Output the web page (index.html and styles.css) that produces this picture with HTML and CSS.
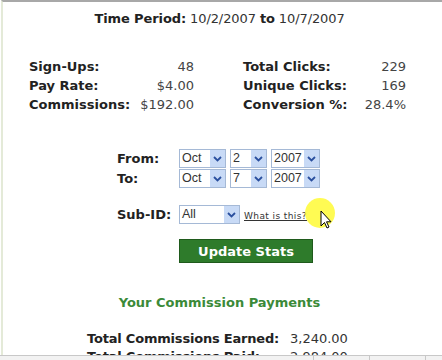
FILE: index.html
```html
<!DOCTYPE html>
<html lang="en">
<head>
  <meta charset="UTF-8">
  <title>Affiliate Stats</title>
  <link rel="stylesheet" href="styles.css">
</head>
<body>

<div class="page">
  <div class="period"><b>Time Period:</b> 10/2/2007 <b>to</b> 10/7/2007</div>

  <div class="stats">
    <div class="stat-block left">
      <span class="label">Sign-Ups:</span><span class="value">48</span>
      <span class="label">Pay Rate:</span><span class="value">$4.00</span>
      <span class="label">Commissions:</span><span class="value">$192.00</span>
    </div>
    <div class="stat-block right">
      <span class="label">Total Clicks:</span><span class="value">229</span>
      <span class="label">Unique Clicks:</span><span class="value">169</span>
      <span class="label">Conversion %:</span><span class="value">28.4%</span>
    </div>
  </div>

  <div class="dates">
    <div class="date-row">
      <span class="label">From:</span>
      <div class="select w-month"><span>Oct</span><i class="arrow"><svg width="9" height="6" viewBox="0 0 9 6"><path d="M1 1l3.5 3.5L8 1" fill="none" stroke="#2a4f9e" stroke-width="1.8"/></svg></i></div>
      <div class="select w-day"><span>2</span><i class="arrow"><svg width="9" height="6" viewBox="0 0 9 6"><path d="M1 1l3.5 3.5L8 1" fill="none" stroke="#2a4f9e" stroke-width="1.8"/></svg></i></div>
      <div class="select w-year"><span>2007</span><i class="arrow"><svg width="9" height="6" viewBox="0 0 9 6"><path d="M1 1l3.5 3.5L8 1" fill="none" stroke="#2a4f9e" stroke-width="1.8"/></svg></i></div>
    </div>
    <div class="date-row">
      <span class="label">To:</span>
      <div class="select w-month"><span>Oct</span><i class="arrow"><svg width="9" height="6" viewBox="0 0 9 6"><path d="M1 1l3.5 3.5L8 1" fill="none" stroke="#2a4f9e" stroke-width="1.8"/></svg></i></div>
      <div class="select w-day"><span>7</span><i class="arrow"><svg width="9" height="6" viewBox="0 0 9 6"><path d="M1 1l3.5 3.5L8 1" fill="none" stroke="#2a4f9e" stroke-width="1.8"/></svg></i></div>
      <div class="select w-year"><span>2007</span><i class="arrow"><svg width="9" height="6" viewBox="0 0 9 6"><path d="M1 1l3.5 3.5L8 1" fill="none" stroke="#2a4f9e" stroke-width="1.8"/></svg></i></div>
    </div>
  </div>

  <div class="subid-row">
    <span class="label">Sub-ID:</span>
    <div class="select w-sub"><span>All</span><i class="arrow"><svg width="9" height="6" viewBox="0 0 9 6"><path d="M1 1l3.5 3.5L8 1" fill="none" stroke="#2a4f9e" stroke-width="1.8"/></svg></i></div>
    <a href="#" class="help">What is this?</a>
  </div>

  <div class="button-row">
    <button class="update">Update Stats</button>
  </div>

  <h3 class="payments-title">Your Commission Payments</h3>

  <div class="payments">
    <span class="label">Total Commissions Earned:</span><span class="value">3,240.00</span>
    <span class="label">Total Commissions Paid:</span><span class="value">2,984.00</span>
  </div>

  <div class="highlight"></div>
  <svg class="cursor" width="12" height="19" viewBox="0 0 12 19"><path d="M1 1v15l3.5-3.5 2.5 5.5 2-1-2.5-5.2H11z" fill="#fff" stroke="#000" stroke-width="1"/></svg>
</div>

<div class="statusbar">
  <span class="cell"></span><span class="cell"></span><span class="cell"></span>
</div>

</body>
</html>
```

FILE: styles.css
```css
body {
  margin: 0;
  font-family: "DejaVu Sans", Verdana, sans-serif;
  font-size: 13px;
  color: #222;
  background: #fff;
  height: 360px;
  overflow: hidden;
}

.page {
  position: relative;
  height: 355px;
  overflow: hidden;
  border-top: 2px solid #a8a8a8;
  border-left: 2px solid #e4ead8;
  margin-left: 1px;
  box-sizing: border-box;
}

.period {
  text-align: center;
  margin-top: 9px;
  line-height: 16px;
  padding-right: 6px;
  color: #333;
  letter-spacing: -0.1px;
}

.period b {
  color: #222;
}

/* Stats */
.stats {
  display: grid;
  grid-template-columns: 165px 163px;
  column-gap: 49px;
  margin: 30px 0 0 26px;
}

.stat-block {
  display: grid;
  grid-template-columns: auto 1fr;
  grid-auto-rows: 19px;
  align-items: center;
}

.stat-block .label,
.date-row .label,
.subid-row .label,
.payments .label {
  font-weight: bold;
}

.stat-block .value {
  text-align: right;
  color: #444;
}

/* Date selects */
.dates {
  margin: 35px 0 0 114px;
  display: flex;
  flex-direction: column;
  gap: 1px;
}

.date-row,
.subid-row {
  display: flex;
  align-items: center;
  height: 19px;
}

.date-row .label,
.subid-row .label {
  width: 62px;
}

.select {
  display: flex;
  align-items: stretch;
  height: 19px;
  box-sizing: border-box;
  border: 1px solid #a5b9d6;
  background: #fff;
  margin-right: 4px;
  font-family: "Liberation Sans", Arial, sans-serif;
  font-size: 12.5px;
  color: #333;
}

.select span {
  flex: 1;
  padding-left: 2px;
  line-height: 17px;
  white-space: nowrap;
}

.select .arrow {
  width: 15px;
  background: #c8daf6;
  display: flex;
  align-items: center;
  justify-content: center;
}

.w-month { width: 47px; }
.w-day { width: 37px; }
.w-year { width: 49px; }
.w-sub { width: 61px; }

.subid-row {
  margin: 17px 0 0 114px;
}

.help {
  font-size: 9px;
  color: #333;
  padding-top: 3px;
  letter-spacing: 0.4px;
}

/* Button */
.button-row {
  margin: 15px 0 0 176px;
}

.update {
  width: 134px;
  height: 24px;
  background: #2e7b2b;
  border: 1px solid #1f5a1c;
  color: #fff;
  font-family: "DejaVu Sans", Verdana, sans-serif;
  font-size: 13px;
  font-weight: bold;
  padding: 0;
}

/* Payments */
.payments-title {
  margin: 32px 0 0;
  text-align: center;
  font-size: 13px;
  color: #3b8a38;
  line-height: 16px;
  padding-right: 6px;
}

.payments {
  display: grid;
  grid-template-columns: 203px auto;
  grid-auto-rows: 18px;
  align-items: center;
  margin: 18px 0 0 84px;
  white-space: nowrap;
}

.payments .label {
  letter-spacing: -0.2px;
}

.payments .value {
  color: #333;
}

/* Cursor highlight */
.highlight {
  position: absolute;
  left: 302px;
  top: 196px;
  width: 30px;
  height: 30px;
  border-radius: 50%;
  background: rgba(255, 250, 40, 0.8);
}

.cursor {
  position: absolute;
  left: 317px;
  top: 208px;
}

/* Status bar */
.statusbar {
  height: 5px;
  border-top: 1px solid #c8c8c8;
  background: #f2f2f2;
  display: flex;
  justify-content: flex-end;
}

.statusbar .cell {
  border-left: 1px solid #c8c8c8;
  width: 55px;
}

.statusbar .cell:last-child {
  width: 16px;
}
```
